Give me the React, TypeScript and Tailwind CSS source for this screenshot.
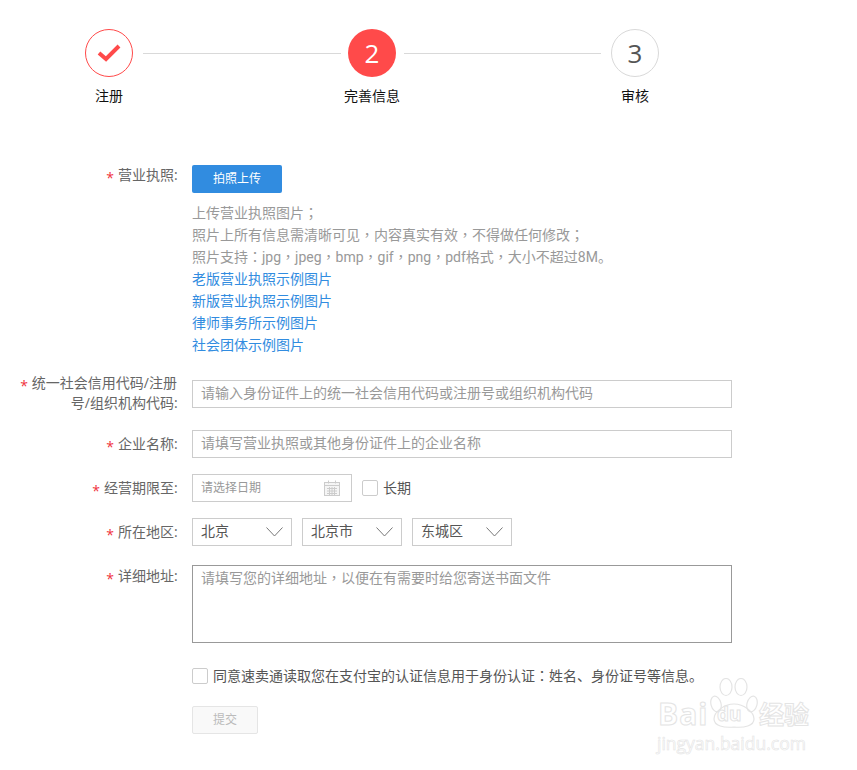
const font = { fontFamily: '"Open Sans", "Noto Sans CJK SC", sans-serif' }

const latinCls = "font-['Roboto','Noto_Sans_CJK_SC',sans-serif]"
const puncCls = "font-['Noto_Sans_CJK_TC',sans-serif] leading-none"

function P({ c }: { c: string }) {
  return <span className={puncCls}>{c}</span>
}

function Req() {
  return <span className="inline-block translate-y-[3px] text-[#f0323c] mr-[4px]">*</span>
}

function Label({ children, className = '' }: { children: React.ReactNode; className?: string }) {
  return (
    <div className={`w-[177px] shrink-0 mr-[15px] text-right text-sm leading-[20px] text-[#666] ${className}`}>
      <Req />
      {children}
      <span className="inline-block w-[3px]">:</span>
    </div>
  )
}

function Select({ value }: { value: string }) {
  return (
    <div className="w-[100px] h-[28px] border border-[#ccc] flex items-center justify-between pl-2 pr-2 text-sm text-[#555]">
      <span className="-mt-[2px]">{value}</span>
      <svg width="17" height="10" viewBox="0 0 17 10" fill="none" stroke="#777" strokeWidth="1">
        <path d="M0.5 0.5L8.5 9L16.5 0.5" />
      </svg>
    </div>
  )
}

function Checkbox() {
  return <span className="w-[16px] h-[16px] border border-[#ccc] rounded-[2px] shrink-0" />
}

function CalendarIcon() {
  return (
    <svg width="16" height="16" viewBox="0 0 16 16" fill="none" stroke="#ccc" strokeWidth="1">
      <rect x="0.5" y="2.5" width="15" height="13" fill="#f5f5f5" />
      <path d="M0.5 5.5H15.5M4.5 0.5V3.5M11.5 0.5V3.5M3 8.5H13M3 11H13M3 13.5H13M5.5 7V15M8 7V15M10.5 7V15" />
    </svg>
  )
}

export default function App() {
  return (
    <div className="relative w-[857px] h-[770px] bg-white overflow-hidden" style={font}>
      {/* Steps */}
      <div className="flex pl-[85px] pt-[29px] items-start">
        <div className="w-[48px] flex flex-col items-center">
          <div className="w-[48px] h-[48px] rounded-full border border-[#ff4a4a] flex items-center justify-center shrink-0">
            <svg width="24" height="18" viewBox="0 0 24 18" fill="none" stroke="#ff4a4a" strokeWidth="4">
              <path d="M2 9L9 15L22 2" />
            </svg>
          </div>
          <div className="mt-[9px] text-sm leading-[20px] text-[#111] whitespace-nowrap">注册</div>
        </div>
        <div className="w-[198px] h-px bg-[#d9d9d9] mt-[24px] ml-[10px] mr-[7px]" />
        <div className="w-[48px] flex flex-col items-center">
          <div className="w-[48px] h-[48px] rounded-full bg-[#ff4a4a] flex items-center justify-center text-white text-[26px] shrink-0">2</div>
          <div className="mt-[9px] text-sm leading-[20px] text-[#111] whitespace-nowrap">完善信息</div>
        </div>
        <div className="w-[197px] h-px bg-[#d9d9d9] mt-[24px] ml-[8px] mr-[10px]" />
        <div className="w-[48px] flex flex-col items-center">
          <div className="w-[48px] h-[48px] rounded-full border border-[#d9d9d9] flex items-center justify-center text-[#555] text-[26px] shrink-0">3</div>
          <div className="mt-[9px] text-sm leading-[20px] text-[#111] whitespace-nowrap">审核</div>
        </div>
      </div>

      {/* Form */}
      <div className="mt-[59px]">
        <div className="flex">
          <Label>营业执照</Label>
          <div>
            <button className="w-[90px] h-[28px] bg-[#318ce0] rounded-[2px] text-white text-xs">拍照上传</button>
            <div className="mt-[9px] text-sm leading-[22px] text-[#999]">
              <div className="h-[22px]">上传营业执照图片<P c="；" /></div>
              <div className="h-[22px]">照片上所有信息需清晰可见<P c="，" />内容真实有效<P c="，" />不得做任何修改<P c="；" /></div>
              <div className={`h-[22px] ${latinCls}`}>照片支持<P c="：" />jpg<P c="，" />jpeg<P c="，" />bmp<P c="，" />gif<P c="，" />png<P c="，" />pdf格式<P c="，" />大小不超过8M。</div>
              <div className="text-[#318ce0]">老版营业执照示例图片</div>
              <div className="text-[#318ce0]">新版营业执照示例图片</div>
              <div className="text-[#318ce0]">律师事务所示例图片</div>
              <div className="text-[#318ce0]">社会团体示例图片</div>
            </div>
          </div>
        </div>

        <div className="flex mt-[24px]">
          <Label className="-mt-[7px] h-[53px]">统一社会信用代码/注册<br />号/组织机构代码</Label>
          <div className="w-[540px] h-[28px] border border-[#ccc] pl-2 text-sm leading-[24px] text-[#999]">请输入身份证件上的统一社会信用代码或注册号或组织机构代码</div>
        </div>

        <div className="flex mt-[4px] items-center">
          <Label>企业名称</Label>
          <div className="w-[540px] h-[28px] border border-[#ccc] pl-2 text-sm leading-[24px] text-[#999]">请填写营业执照或其他身份证件上的企业名称</div>
        </div>

        <div className="flex mt-[16px] items-center">
          <Label>经营期限至</Label>
          <div className="w-[160px] h-[28px] border border-[#ccc] pl-2 pr-[11px] flex items-center justify-between text-xs text-[#999]">
            <span>请选择日期</span>
            <CalendarIcon />
          </div>
          <div className="ml-[10px] flex items-center gap-[5px] text-sm text-[#555]">
            <Checkbox />
            <span>长期</span>
          </div>
        </div>

        <div className="flex mt-[16px] items-center">
          <Label>所在地区</Label>
          <div className="flex gap-[10px]">
            <Select value="北京" />
            <Select value="北京市" />
            <Select value="东城区" />
          </div>
        </div>

        <div className="flex mt-[19px]">
          <Label className="pt-[1px]">详细地址</Label>
          <div className="w-[540px] h-[78px] border border-[#999] pl-2 pt-[1px] text-sm leading-[22px] text-[#999]">请填写您的详细地址<P c="，" />以便在有需要时给您寄送书面文件</div>
        </div>

        <div className="flex mt-[23px] ml-[192px] h-[20px] items-center gap-[5px] text-sm text-[#555]">
          <Checkbox />
          <span>同意速卖通读取您在支付宝的认证信息用于身份认证<P c="：" />姓名、身份证号等信息。</span>
        </div>

        <button className="block mt-[20px] ml-[192px] w-[66px] h-[28px] border border-[#e5e5e5] bg-[#f9f9f9] rounded-[2px] text-xs text-[#bbb]">提交</button>
      </div>

      {/* Watermark */}
      <div className="absolute left-[658px] top-[678px] w-[156px] h-[76px] text-white [-webkit-text-stroke:1px_#e4e4e4] pointer-events-none">
        <span className="absolute left-0 top-[21px] text-[30px] leading-[30px] font-bold tracking-[1px]">Bai</span>
        <svg className="absolute left-[52px] top-0" width="48" height="51" viewBox="0 0 48 51" fill="none" stroke="#e4e4e4" strokeWidth="1.2">
          <ellipse cx="16" cy="9" rx="6" ry="8.5" />
          <ellipse cx="31" cy="9" rx="6" ry="8.5" />
          <ellipse cx="6" cy="26" rx="5" ry="8" transform="rotate(-15 6 26)" />
          <ellipse cx="42" cy="26" rx="5" ry="8" transform="rotate(15 42 26)" />
          <path d="M24 26C14 26 4 34 4 41C4 48 14 50 24 49C34 50 44 48 44 41C44 34 34 26 24 26Z" />
        </svg>
        <span className="absolute left-[59px] top-[25px] text-[19px] leading-[22px] font-bold">du</span>
        <span className="absolute left-[101px] top-[21px] text-[25px] leading-[30px] font-bold">经验</span>
        <span className="absolute left-[-1px] top-[55px] text-[17.5px] leading-[20px] [-webkit-text-stroke:0.6px_#e4e4e4]">jingyan.baidu.com</span>
      </div>
    </div>
  )
}
